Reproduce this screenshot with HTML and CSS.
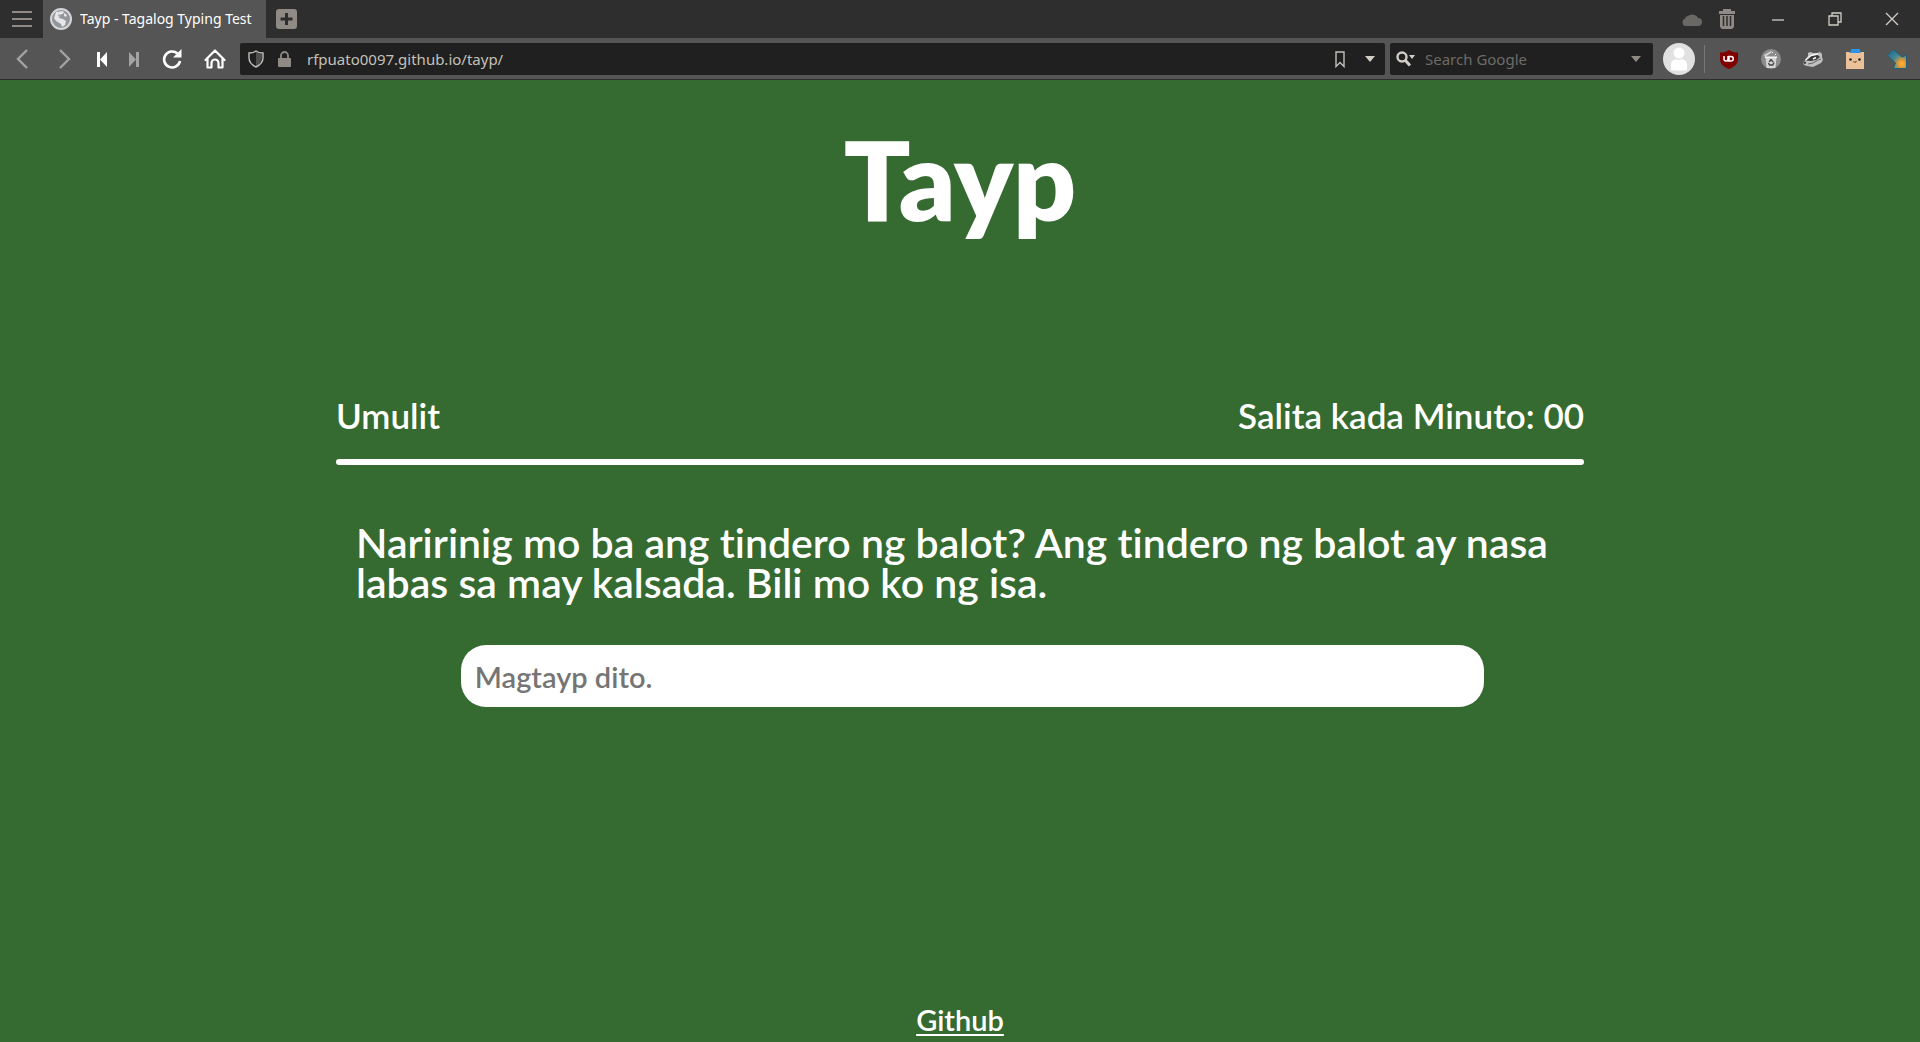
FILE: index.html
```html
<!DOCTYPE html>
<html lang="tl">
<head>
<meta charset="utf-8">
<meta name="viewport" content="width=device-width, initial-scale=1">
<title>Tayp - Tagalog Typing Test</title>
<link rel="stylesheet" href="styles.css">
</head>
<body>
<header class="browser">
  <div class="tabbar">
    <button class="btn" type="button" aria-label="Menu">
      <svg width="20" height="16" viewBox="0 0 20 16" fill="#8f8b84"><path d="M0 0h20v2H0zM0 7h20v2H0zM0 14h20v2H0z"/></svg>
    </button>
    <div class="tab">
      <svg width="22" height="22" viewBox="0 0 22 22"><circle cx="11" cy="11" r="10" fill="#8f969c" stroke="#d6d6d6" stroke-width="2"/><path d="M6 4l7-1 1 2-4 2-1 3 4 1 3 2-1 4-3 2-1-3-5-3-2-3zM14 5l3 2-1 2-2-1z" fill="#e6e6e6"/><path d="M8 7l2-1-1 3z" fill="#8f969c"/></svg>
      <span class="tab-title">Tayp - Tagalog Typing Test</span>
    </div>
    <button class="btn new-tab" type="button" aria-label="New tab">
      <svg width="21" height="20" viewBox="0 0 21 20"><rect width="21" height="20" rx="3" fill="#8f8b84"/><path d="M10.500 4v12M4.500 10h12" stroke="#2e2e2e" stroke-width="3"/></svg>
    </button>
    <div class="window-tools">
      <button class="btn tool" type="button" aria-label="Sync">
        <svg width="21" height="13" viewBox="0 0 21 13" fill="#6a6865"><path d="M4 13a4 4 0 0 1 0-7.500A3 3 0 0 1 7 3a6 5 0 0 1 10 2 4 4 0 0 1 0 8z"/></svg>
      </button>
      <button class="btn tool closed-tabs" type="button" aria-label="Closed tabs">
        <svg width="16" height="20" viewBox="0 0 16 20"><path d="M5 2V1h6v1" fill="none" stroke="#8f8b84" stroke-width="2"/><path d="M0 2h16v3H0zM1 6h14v12l-2 2H3l-2-2z" fill="#8f8b84"/><path d="M4.500 7v10M8 7v10M11.500 7v10" stroke="#2e2e2e" stroke-width="1.500"/></svg>
      </button>
      <button class="btn window" type="button" aria-label="Minimize">
        <svg width="12" height="12" viewBox="0 0 12 12"><path d="M0 7h12" stroke="#d2cec6" stroke-width="1.300"/></svg>
      </button>
      <button class="btn window" type="button" aria-label="Restore">
        <svg width="14" height="14" viewBox="0 0 14 14" fill="none" stroke="#d2cec6" stroke-width="1.300"><path d="M1 4h9v9H1zM4 4V1h9v9h-3"/></svg>
      </button>
      <button class="btn window" type="button" aria-label="Close">
        <svg width="14" height="14" viewBox="0 0 14 14" stroke="#d2cec6" stroke-width="1.300"><path d="M1 1l12 12M13 1L1 13"/></svg>
      </button>
    </div>
  </div>
  <nav class="toolbar" aria-label="Browser">
    <button class="btn" type="button" aria-label="Back">
      <svg width="12" height="20" viewBox="0 0 12 20" fill="none" stroke="#a3a3a3" stroke-width="2.400"><path d="M11 1L2 10l9 9"/></svg>
    </button>
    <button class="btn" type="button" aria-label="Forward">
      <svg width="12" height="20" viewBox="0 0 12 20" fill="none" stroke="#a3a3a3" stroke-width="2.400"><path d="M1 1l9 9-9 9"/></svg>
    </button>
    <button class="btn narrow" type="button" aria-label="Rewind">
      <svg width="12" height="15" viewBox="0 0 12 15" fill="#fff"><path d="M1 0h3v15H1zM11 0v15L4 7.500z"/></svg>
    </button>
    <button class="btn narrow" type="button" aria-label="Fast forward">
      <svg width="12" height="15" viewBox="0 0 12 15" fill="#a3a3a3"><path d="M8 0h3v15H8zM1 0v15l7-7.500z"/></svg>
    </button>
    <button class="btn" type="button" aria-label="Reload">
      <svg width="20" height="20" viewBox="0 0 20 20"><path d="M15.500 4.500A8 8 0 1 0 18 12" fill="none" stroke="#fff" stroke-width="2.600"/><path d="M19.500 0v8.500H11z" fill="#fff"/></svg>
    </button>
    <button class="btn" type="button" aria-label="Home">
      <svg width="22" height="20" viewBox="0 0 22 20" fill="none" stroke="#fff" stroke-width="2.200" stroke-linejoin="round" stroke-linecap="round"><path d="M1.500 11L11 1.500l9.500 9.500M3.500 10v8.500h4V14a3.500 3.500 0 0 1 7 0v4.500h4V10"/></svg>
    </button>
    <div class="field address">
      <svg width="16" height="18" viewBox="0 0 16 18"><path d="M8 2v14c4-2 6-5 6-12z" fill="#505050"/><path d="M8 1c2 1.500 4 2 7 2v5c0 4-3 7-7 9-4-2-7-5-7-9V3c3 0 5-.500 7-2z" fill="none" stroke="#c4c0b9" stroke-width="1.400"/></svg>
      <svg width="13" height="16" viewBox="0 0 13 16"><rect y="7" width="13" height="9" rx="1" fill="#8f8b84"/><path d="M3 8V4.500a3.500 3.500 0 0 1 7 0V8" fill="none" stroke="#8f8b84" stroke-width="1.800"/></svg>
      <input class="field-input" type="text" aria-label="Address" value="rfpuato0097.github.io/tayp/">
      <svg width="10" height="17" viewBox="0 0 10 17" fill="none" stroke="#c4c0b9" stroke-width="1.400"><path d="M1 1h8v14.500l-4-4-4 4z"/></svg>
      <svg width="10" height="6" viewBox="0 0 10 6" fill="#d2cec6"><path d="M0 0h10L5 6z"/></svg>
    </div>
    <div class="field search">
      <svg width="20" height="16" viewBox="0 0 20 16"><circle cx="6" cy="6" r="4.500" fill="none" stroke="#d2cec6" stroke-width="2.400"/><path d="M9 9l5 5.500" stroke="#d2cec6" stroke-width="3"/><path d="M13 4h6l-3 4z" fill="#d2cec6"/></svg>
      <input class="field-input" type="text" aria-label="Search" placeholder="Search Google">
      <svg width="10" height="6" viewBox="0 0 10 6" fill="#8f8b84"><path d="M0 0h10L5 6z"/></svg>
    </div>
    <button class="btn profile" type="button" aria-label="Profile">
      <svg width="32" height="32" viewBox="0 0 32 32"><circle cx="16" cy="16" r="16" fill="#e1e1e1"/><circle cx="16" cy="10" r="5.500" fill="#fff"/><path d="M8 27v-5a6 6 0 0 1 5-6q3 2 6 0a6 6 0 0 1 5 6v5q-8 1-16 0z" fill="#fff"/></svg>
    </button>
    <div class="extensions">
      <button class="btn ext" type="button" aria-label="uBlock Origin">
        <svg width="18" height="19" viewBox="0 0 18 19"><path d="M9 0c3 2 5 2.500 9 2.500V9c0 5-4 8-9 10-5-2-9-5-9-10V2.500C4 2.500 6 2 9 0z" fill="#800000"/><path d="M4 6v3a2 2 0 0 0 4 0V6v5h3a2.300 2.300 0 0 0 0-4.600H9V11" fill="none" stroke="#fff" stroke-width="1.500"/></svg>
      </button>
      <button class="btn ext" type="button" aria-label="Cookie cleaner">
        <svg width="20" height="20" viewBox="0 0 20 20"><circle cx="10" cy="10" r="10" fill="#8b8b8b"/><path d="M3 6l7-4 1 1-7 5z" fill="#d6d6d6"/><path d="M4.500 8h11l-1 11h-9z" fill="#d4d4d4"/><path d="M4 7.500h12V9H4zM11 3h1v1h-1zM14 5h1v1h-1z" fill="#f5f5f5"/><path d="M8.200 13L10 10.500l2.200 2.500M13 13.500l-1.200 2.500H8.500L7.500 14" fill="none" stroke="#444" stroke-width="1.400"/></svg>
      </button>
      <button class="btn ext" type="button" aria-label="Privacy Badger">
        <svg width="20" height="16" viewBox="0 0 20 16"><path d="M0 12l3-4 2-3V2l2-1 3 1 4 0 3-1 2 2v3l1 3-2 3-4 2-4 2-6-1-3-1z" fill="#c0c0c0"/><path d="M3 9.500L8 5l6-1.500L17 6l-4 3-5 1z" fill="#3a3a3a"/><path d="M2.500 9L8 4.500 15 3M10 8l3-1.500" fill="none" stroke="#f4f4f4" stroke-width="1.400"/><path d="M5 13l5-1 5-3 3-1" fill="none" stroke="#666"/><circle cx="1.800" cy="11.800" r="1.300" fill="#444"/></svg>
      </button>
      <button class="btn ext" type="button" aria-label="Box">
        <svg width="18" height="20" viewBox="0 0 18 20"><path d="M0 3h18v17H0z" fill="#eac199"/><path d="M5 0h9v2l1 2H3l2-2z" fill="#2d93e8"/><circle cx="4.500" cy="10.500" r="1.300" fill="#222"/><circle cx="13.500" cy="10.500" r="1.300" fill="#222"/><path d="M7.500 12.500q.800 1.500 1.500 0 .800 1.500 1.500 0" fill="none" stroke="#222"/></svg>
      </button>
      <button class="btn ext" type="button" aria-label="Download helper">
        <svg width="20" height="20" viewBox="0 0 20 20"><defs><radialGradient id="arrow" cx=".75" cy=".75" r=".75"><stop offset="0" stop-color="#ffb52f"/><stop offset=".25" stop-color="#e39a35"/><stop offset=".6" stop-color="#4a8a90"/><stop offset="1" stop-color="#2b7795"/></radialGradient></defs><path d="M6.500 .5L15 8l4.500-2v13.500H6L8.500 14 .5 6.500z" fill="url(#arrow)" stroke="#235d78"/></svg>
      </button>
    </div>
  </nav>
</header>
<main class="page">
  <h1 class="title">Tayp</h1>
  <section class="test">
    <div class="status">
      <button class="restart" type="button">Umulit</button>
      <span class="score">Salita kada Minuto: 00</span>
    </div>
    <hr class="rule">
    <p class="passage" id="passage">Naririnig mo ba ang tindero ng balot? Ang tindero ng balot ay nasa labas sa may kalsada. Bili mo ko ng isa.</p>
    <input class="typing" type="text" aria-labelledby="passage" placeholder="Magtayp dito.">
  </section>
  <footer class="footer"><a class="link" href="https://github.com/rfpuato0097/tayp">Github</a></footer>
</main>
</body>
</html>
```
FILE: styles.css
```css
* {
  box-sizing: border-box;
}

body {
  margin: 0;
  min-height: 100vh;
  display: flex;
  flex-direction: column;
  background: #356b31;
  color: #fff;
  font-family: Lato, "Open Sans", sans-serif;
  font-weight: 600;
  font-variant-ligatures: none;
}

svg {
  display: block;
  flex: none;
}

button,
input {
  border: 0;
  padding: 0;
  background: none;
  color: inherit;
  font: inherit;
}

/* Browser frame */
.browser {
  border-bottom: 1px solid #2e2e2e;
  background: #555;
  font: 400 14px/20px "Noto Sans", "Open Sans", sans-serif;
}

.tabbar {
  display: flex;
  height: 38px;
  background: #2e2e2e;
}

.btn {
  flex: none;
  display: flex;
  align-items: center;
  justify-content: center;
  width: 43px;
}

.tab {
  display: flex;
  align-items: center;
  gap: 8px;
  width: 223px;
  padding: 0 8px 0 7px;
  background: #555;
}

.tab-title {
  overflow: hidden;
  white-space: nowrap;
}

.new-tab {
  width: 41px;
}

.window-tools {
  display: flex;
  margin-left: auto;
}

.tool {
  width: 35px;
}

.closed-tabs {
  margin-right: 5px;
}

.window {
  width: 57px;
}

.toolbar {
  display: flex;
  align-items: stretch;
  height: 41px;
  padding: 5px 2px 4px 0;
}

.narrow {
  width: 32px;
}

.field {
  display: flex;
  align-items: center;
  border-radius: 2px;
  background: #202020;
  color: #c4c0b9;
  font-size: 15px;
}

.field-input {
  flex: 1;
  min-width: 0;
  outline: 0;
}

.field-input::placeholder {
  color: #6d6b68;
  opacity: 1;
}

.address {
  flex: 1;
  gap: 14px;
  margin-left: 4px;
  padding: 0 10px 0 8px;
}

.address .field-input {
  margin-left: 2px;
}

.address svg:last-child {
  margin-left: 6px;
}

.search {
  gap: 9px;
  width: 263px;
  margin-left: 5px;
  padding: 0 12px 0 6px;
}

.profile {
  width: 51px;
}

.extensions {
  display: flex;
  margin: 2px 0;
  padding-left: 3px;
  border-left: 1px solid #777;
}

.ext {
  width: 42px;
}

/* Typing test */
.page {
  flex: 1;
  display: flex;
  flex-direction: column;
  align-items: center;
}

.title {
  margin: 38px 0 157px;
  font-size: 110px;
  line-height: 120px;
  font-weight: 800;
}

.test {
  width: 65%;
}

.status {
  display: flex;
  justify-content: space-between;
  font-size: 35px;
  line-height: 40px;
}

.rule {
  height: 6px;
  margin: 24px 0 58px;
  border: 0;
  border-radius: 3px;
  background: #fff;
}

.passage {
  margin: 0 18px 42px 20px;
  font-size: 41px;
  line-height: 40px;
}

.typing {
  display: block;
  width: 82%;
  height: 62px;
  margin-left: 10%;
  padding: 0 14px;
  border-radius: 25px;
  background: #fff;
  color: #333;
  font-size: 29px;
}

.typing::placeholder {
  color: #757575;
  opacity: 1;
}

.footer {
  margin-top: auto;
  padding-bottom: 2px;
  font-size: 29px;
  line-height: 40px;
}

.link {
  color: inherit;
  text-underline-offset: 3px;
}
```
